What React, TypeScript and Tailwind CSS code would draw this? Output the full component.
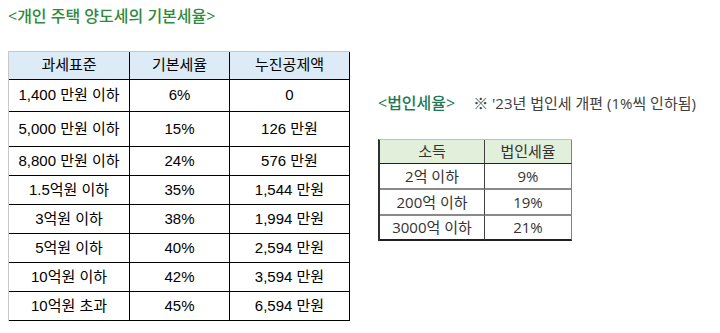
import React from "react";

const leftRows: [string, string, string, number][] = [
  ["1,400 만원 이하", "6%", "0", 32],
  ["5,000 만원 이하", "15%", "126 만원", 35],
  ["8,800 만원 이하", "24%", "576 만원", 29],
  ["1.5억원 이하", "35%", "1,544 만원", 29],
  ["3억원 이하", "38%", "1,994 만원", 29],
  ["5억원 이하", "40%", "2,594 만원", 29],
  ["10억원 이하", "42%", "3,594 만원", 29],
  ["10억원 초과", "45%", "6,594 만원", 29],
];

const rightRows: [string, string, number, boolean][] = [
  ["2억 이하", "9%", 26, false],
  ["200억 이하", "19%", 26, false],
  ["3000억 이하", "21%", 25, true],
];

const cellFont = { fontFamily: '"Liberation Sans", "Noto Sans CJK KR", sans-serif' };
const krFont = { fontFamily: '"Open Sans", "Noto Sans CJK KR", sans-serif' };

export default function App() {
  return (
    <div className="w-[720px] h-[333px] bg-white flex flex-row overflow-hidden">
      {/* Left section */}
      <div className="flex flex-col pl-[8px] pt-[6px]">
        <div
          className="h-[20px] leading-[20px] text-[16px] text-[#2f8a3d] font-medium"
          style={krFont}
        >
          &lt;개인 주택 양도세의 기본세율&gt;
        </div>
        <div
          className="mt-[25px] w-[342px] border-t border-l border-[#c8c8c8] text-[15px] text-black"
          style={cellFont}
        >
          <div className="grid grid-cols-[121px_100px_120px] h-[28px] bg-[#ddebf7]">
            <div className="flex items-center justify-center border-r border-b border-black">과세표준</div>
            <div className="flex items-center justify-center border-r border-b border-black">기본세율</div>
            <div className="flex items-center justify-center border-r border-b border-black">누진공제액</div>
          </div>
          {leftRows.map(([a, b, c, h]) => (
            <div key={a} className="grid grid-cols-[121px_100px_120px]" style={{ height: h }}>
              <div className="flex items-center justify-center border-r border-b border-black">{a}</div>
              <div className="flex items-center justify-center border-r border-b border-black">{b}</div>
              <div className="flex items-center justify-center border-r border-b border-black">{c}</div>
            </div>
          ))}
        </div>
      </div>

      {/* Right section */}
      <div className="flex flex-col ml-[28px] pt-[93px]">
        <div className="flex flex-row items-center h-[20px]">
          <span className="text-[16px] text-[#1f7a58] font-medium" style={krFont}>
            &lt;법인세율&gt;
          </span>
          <span className="ml-[18px] text-[15px] text-[#404040]" style={krFont}>
            ※ '23년 법인세 개편 (1%씩 인하됨)
          </span>
        </div>
        <div
          className="mt-[26px] w-[194px] border-t border-[#c0c0c0] border-l-2 border-l-[#303030] text-[15px] text-[#333333]"
          style={krFont}
        >
          <div className="grid grid-cols-[105px_87px] h-[24px] bg-[#e2efda]">
            <div className="flex items-center justify-center border-r border-r-[#404040] border-b border-b-[#202020]">소득</div>
            <div className="flex items-center justify-center border-r border-r-[#808080] border-b border-b-[#202020]">법인세율</div>
          </div>
          {rightRows.map(([a, b, h, last]) => (
            <div key={a} className="grid grid-cols-[105px_87px]" style={{ height: h }}>
              <div
                className={
                  last
                    ? "flex items-center justify-center border-r border-r-[#404040] border-b-2 border-b-[#202020]"
                    : "flex items-center justify-center border-r border-r-[#404040] border-b-2 border-b-[#8a8a8a]"
                }
              >
                {a}
              </div>
              <div
                className={
                  last
                    ? "flex items-center justify-center border-r border-r-[#808080] border-b-2 border-b-[#202020]"
                    : "flex items-center justify-center border-r border-r-[#808080] border-b-2 border-b-[#8a8a8a]"
                }
              >
                {b}
              </div>
            </div>
          ))}
        </div>
      </div>
    </div>
  );
}
